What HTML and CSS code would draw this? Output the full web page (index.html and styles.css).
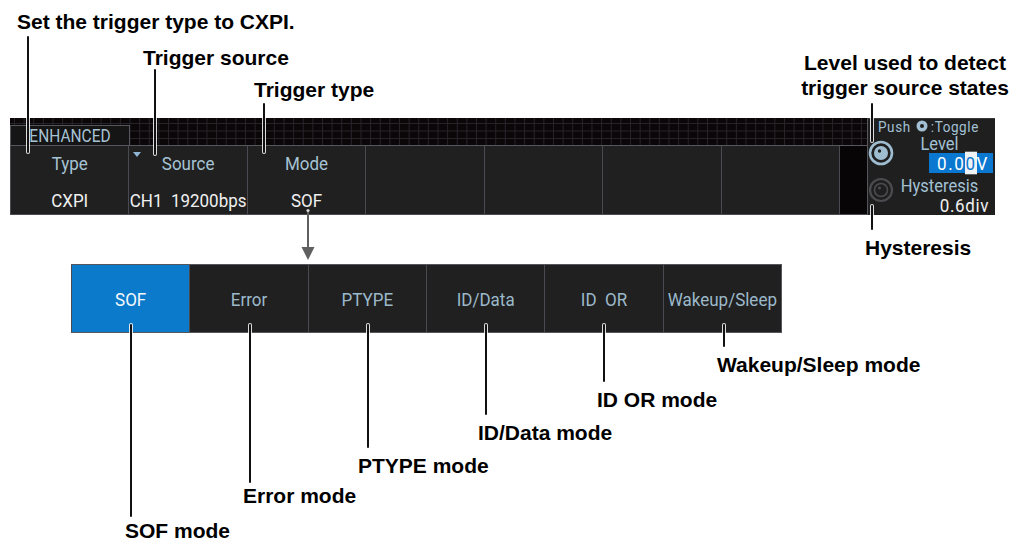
FILE: index.html
```html
<!DOCTYPE html>
<html lang="en">
<head>
    <meta charset="UTF-8">
    <title>CXPI Trigger Settings</title>
    <link rel="stylesheet" href="styles.css">
</head>
<body>
    <div class="figure">
        <div class="screen">
            <div class="screen-main">
                <div class="grid-strip">
                    <div class="tab"><span class="tall">ENHANCED</span></div>
                </div>
                <div class="menu">
                    <div class="cell"><span class="label tall">Type</span><span class="value tall">CXPI</span></div>
                    <div class="cell has-list"><span class="label tall">Source</span><span class="value tall">CH1  19200bps</span></div>
                    <div class="cell"><span class="label tall">Mode</span><span class="value tall">SOF</span></div>
                    <div class="cell"></div>
                    <div class="cell"></div>
                    <div class="cell"></div>
                    <div class="cell"></div>
                    <div class="menu-gap"></div>
                </div>
            </div>
            <div class="side">
                <div class="push"><span class="tall">Push</span>
                    <svg class="push-icon" width="12" height="12" viewBox="0 0 12 12">
                        <circle cx="6" cy="6" r="5.5" fill="#a3c1d4"/>
                        <circle cx="6" cy="6" r="2" fill="#1f1f1f"/>
                    </svg><span class="tall">:Toggle</span></div>
                <svg class="knob knob-level" width="26" height="26" viewBox="0 0 26 26">
                    <circle cx="13" cy="13" r="11" fill="none" stroke="#9fbdd1" stroke-width="2.6"/>
                    <circle cx="13" cy="13" r="7" fill="#9fbdd1"/>
                    <circle cx="11.5" cy="11" r="1.7" fill="#1f1f1f"/>
                </svg>
                <div class="side-label level-label"><span class="tall">Level</span></div>
                <div class="level-value"><span class="tall">0.0<span class="cursor">0</span>V</span></div>
                <svg class="knob knob-hyst" width="26" height="26" viewBox="0 0 26 26">
                    <circle cx="13" cy="13" r="11" fill="none" stroke="#4c4c50" stroke-width="2.2"/>
                    <circle cx="13" cy="13" r="6.5" fill="none" stroke="#4c4c50" stroke-width="1.6"/>
                    <circle cx="11.5" cy="11" r="1.5" fill="#4c4c50"/>
                </svg>
                <div class="side-label hyst-label"><span class="tall">Hysteresis</span></div>
                <div class="hyst-value"><span class="tall">0.6div</span></div>
            </div>
        </div>

        <div class="submenu">
            <div class="item active"><span class="tall">SOF</span></div>
            <div class="item"><span class="tall">Error</span></div>
            <div class="item"><span class="tall">PTYPE</span></div>
            <div class="item"><span class="tall">ID/Data</span></div>
            <div class="item"><span class="tall">ID  OR</span></div>
            <div class="item"><span class="tall">Wakeup/Sleep</span></div>
        </div>

        <svg class="mode-arrow" width="16" height="53" viewBox="0 0 16 53">
            <line x1="8" y1="2" x2="8" y2="41" stroke="#606060" stroke-width="2"/>
            <circle cx="8" cy="2.5" r="1.6" fill="#d8d8d8"/>
            <polygon points="1.5,39 14.5,39 8,52" fill="#606060"/>
        </svg>

        <div class="note note-set">Set the trigger type to CXPI.</div>
        <div class="note note-source">Trigger source</div>
        <div class="note note-type">Trigger type</div>
        <div class="note note-level">Level used to detect<br>trigger source states</div>
        <div class="note note-hyst">Hysteresis</div>
        <div class="note note-wake">Wakeup/Sleep mode</div>
        <div class="note note-idor">ID OR mode</div>
        <div class="note note-iddata">ID/Data mode</div>
        <div class="note note-ptype">PTYPE mode</div>
        <div class="note note-error">Error mode</div>
        <div class="note note-sof">SOF mode</div>

        <div class="lead lead-set"></div>
        <div class="lead lead-source"></div>
        <div class="lead lead-type"></div>
        <div class="lead lead-level"></div>
        <div class="lead lead-hyst"></div>
        <div class="lead lead-sof"></div>
        <div class="lead lead-error"></div>
        <div class="lead lead-ptype"></div>
        <div class="lead lead-iddata"></div>
        <div class="lead lead-idor"></div>
        <div class="lead lead-wake"></div>
    </div>
</body>
</html>
```

FILE: styles.css
```css
body {
    margin: 0;
    background: #fff;
}
.figure {
    position: relative;
    width: 1023px;
    height: 541px;
    padding-top: 118px;
    box-sizing: border-box;
    overflow: hidden;
}

/* scope screen */
.screen,
.submenu {
    font-family: Roboto, "DejaVu Sans", sans-serif;
}
.tall {
    display: inline-block;
    transform: scaleY(1.13);
    white-space: pre;
}
.screen {
    display: flex;
    margin-left: 10px;
    width: 985px;
    height: 97px;
}
.screen-main {
    width: 857px;
    display: flex;
    flex-direction: column;
}
.grid-strip {
    height: 27px;
    background-color: #0b0709;
    background-image:
        linear-gradient(90deg, #262429 1px, transparent 1px),
        linear-gradient(180deg, #262429 1px, transparent 1px);
    background-size: 9.63px 100%, 100% 7.5px;
    background-position: 4px 0, 0 5px;
}
.tab {
    margin-top: 7px;
    width: 120px;
    height: 20px;
    box-sizing: border-box;
    border: 1px solid #55575c;
    border-bottom: none;
    background: #151515;
    color: #a6c3d4;
    font-size: 15.5px;
    line-height: 20px;
    text-align: center;
}
.tab .tall {
    transform: scaleY(1.18);
}
.menu {
    flex: 1;
    display: grid;
    grid-template-columns: repeat(7, 1fr) 28px;
    border-top: 1px solid #55575c;
    border-bottom: 1px solid #4a4a50;
}
.cell {
    position: relative;
    display: flex;
    flex-direction: column;
    align-items: center;
    background: #202020;
    border-left: 1px solid #4a4a50;
    padding-top: 5px;
    font-size: 17px;
}
.cell .label {
    color: #a6c3d4;
    line-height: 24px;
}
.cell .value {
    color: #f0f0f0;
    line-height: 24px;
    margin-top: 13px;
}
.has-list::before {
    content: "";
    position: absolute;
    left: 4px;
    top: 6px;
    border-left: 4.5px solid transparent;
    border-right: 4.5px solid transparent;
    border-top: 5px solid #8fb6d6;
}
.menu-gap {
    background: #080507;
    border-left: 1px solid #4a4a50;
}

/* right-hand knob panel */
.side {
    width: 128px;
    box-sizing: border-box;
    background: #1f1f1f;
    border-left: 1px solid #55575c;
    border-top: 1px solid #3a3a3e;
    display: grid;
    grid-template-columns: 26px 1fr;
    grid-template-rows: 14px 20px 23px 19px 20px;
    color: #a3c1d4;
}
.push {
    grid-column: 1 / 3;
    padding-left: 10px;
    font-size: 13.5px;
    line-height: 14px;
    letter-spacing: 0.6px;
    display: flex;
    align-items: center;
    gap: 3px;
}
.push .tall {
    transform: scaleY(1.1);
}
.push-icon {
    margin-left: 2px;
}
.knob {
    grid-column: 1;
}
.knob-level {
    grid-row: 2 / 4;
    margin-top: 7px;
}
.knob-hyst {
    grid-row: 4 / 6;
    margin-top: 1px;
}
.side-label {
    grid-column: 2;
    text-align: center;
    padding-right: 10px;
    font-size: 16.5px;
    line-height: 16px;
}
.level-label {
    grid-row: 2;
    padding-top: 3px;
}
.hyst-label {
    grid-row: 4;
    line-height: 20px;
}
.level-value {
    grid-column: 2;
    grid-row: 3;
    margin: 0 2px 3px 35px;
    background: #0a78d0;
    color: #fff;
    font-size: 17px;
    line-height: 20px;
    text-align: right;
    padding-right: 4px;
    letter-spacing: 1.6px;
}
.cursor {
    background: #eef2f5;
    color: #0a78d0;
}
.hyst-value {
    grid-column: 2;
    grid-row: 5;
    text-align: right;
    padding-right: 6px;
    color: #f0f0f0;
    font-size: 17px;
    line-height: 20px;
    letter-spacing: 0.6px;
}

/* mode sub menu */
.submenu {
    margin: 49px 0 0 71px;
    width: 711px;
    height: 69px;
    box-sizing: border-box;
    display: grid;
    grid-template-columns: repeat(6, 1fr);
    border: 1px solid #55575c;
    border-left: none;
}
.item {
    display: flex;
    align-items: center;
    justify-content: center;
    background: #202020;
    color: #9cb9ca;
    border-left: 1px solid #4a4a50;
    font-size: 17px;
}
.item.active {
    background: #0b7acb;
    color: #f4f8fb;
}

.mode-arrow {
    position: absolute;
    left: 300px;
    top: 208px;
}

/* callouts */
.note {
    position: absolute;
    font-family: "Liberation Sans", Arial, sans-serif;
    font-weight: bold;
    font-size: 21px;
    line-height: 24px;
    color: #000;
    white-space: nowrap;
}
.note-set { left: 17px; top: 10px; }
.note-source { left: 143px; top: 46px; }
.note-type { left: 254px; top: 78px; }
.note-level { left: 796px; top: 50px; width: 218px; text-align: center; line-height: 25px; }
.note-hyst { left: 865px; top: 236px; }
.note-wake { left: 717px; top: 353px; }
.note-idor { left: 597px; top: 388px; }
.note-iddata { left: 478px; top: 421px; }
.note-ptype { left: 358px; top: 454px; }
.note-error { left: 243px; top: 484px; }
.note-sof { left: 125px; top: 519px; }

.lead {
    position: absolute;
    width: 1.5px;
    background: #111;
    border-radius: 1px;
    box-shadow: 0 0 0 1px rgba(255, 255, 255, 0.85);
}
.lead-set { left: 27px; top: 36px; height: 117px; }
.lead-source { left: 154px; top: 69px; height: 86px; }
.lead-type { left: 263px; top: 103px; height: 50px; }
.lead-level { left: 871px; top: 103px; height: 39px; }
.lead-hyst { left: 871px; top: 205px; height: 25px; }
.lead-sof { left: 130px; top: 324px; height: 193px; }
.lead-error { left: 249px; top: 324px; height: 159px; }
.lead-ptype { left: 367px; top: 324px; height: 124px; }
.lead-iddata { left: 485px; top: 324px; height: 91px; }
.lead-idor { left: 603px; top: 324px; height: 58px; }
.lead-wake { left: 723px; top: 324px; height: 23px; }
```
